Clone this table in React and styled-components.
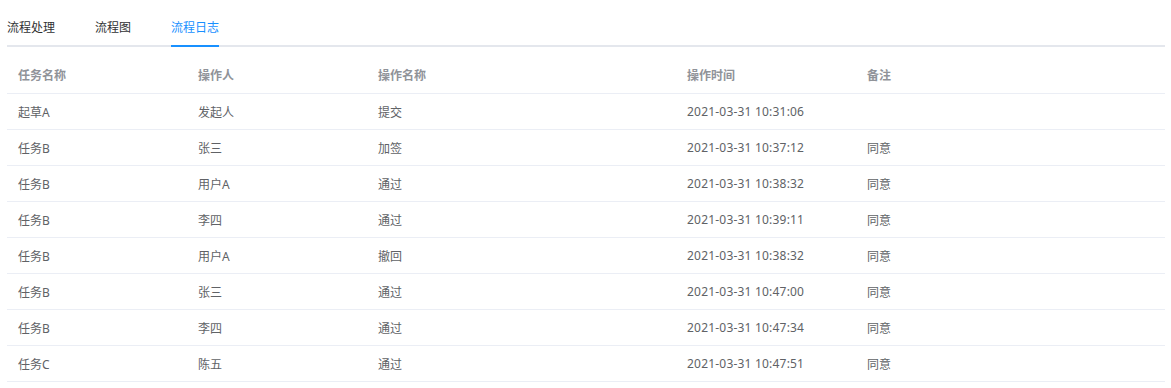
import React, { useState } from 'react';
import styled, { createGlobalStyle } from 'styled-components';

const GlobalStyle = createGlobalStyle`
  body {
    margin: 0;
    background: #fff;
    font-family: "Noto Sans", "Noto Sans CJK SC", sans-serif;
  }
`;

const Page = styled.div`
  padding: 0 6px 0 7px;
`;

const TabBar = styled.div`
  display: flex;
  height: 45px;
  border-bottom: 2px solid #e4e7ed;
  margin-bottom: 10px;
`;

const Tab = styled.div`
  position: relative;
  display: flex;
  align-items: center;
  padding-top: 9px;
  margin-right: ${p => (p.$last ? 0 : '40px')};
  font-size: 12px;
  color: ${p => (p.$active ? '#1890ff' : '#303133')};
  cursor: pointer;

  &::after {
    content: '';
    display: ${p => (p.$active ? 'block' : 'none')};
    position: absolute;
    left: 0;
    right: 0;
    bottom: -2px;
    height: 2px;
    background: #1890ff;
  }
`;

const Table = styled.table`
  width: 100%;
  border-collapse: collapse;
  table-layout: fixed;
  font-size: 12px;
`;

const Th = styled.th`
  height: 36px;
  padding: 0 11px;
  text-align: left;
  font-weight: 600;
  color: #909399;
  border-bottom: 1px solid #ebeef5;
`;

const Td = styled.td`
  height: 35px;
  padding: 0 11px;
  color: #606266;
  border-bottom: 1px solid #ebeef5;
  letter-spacing: ${p => (p.$mono ? '0.2px' : 'normal')};
`;

const columns = [
  { title: '任务名称', width: 180 },
  { title: '操作人', width: 180 },
  { title: '操作名称', width: 309 },
  { title: '操作时间', width: 180 },
  { title: '备注' },
];

const rows = [
  ['起草A', '发起人', '提交', '2021-03-31 10:31:06', ''],
  ['任务B', '张三', '加签', '2021-03-31 10:37:12', '同意'],
  ['任务B', '用户A', '通过', '2021-03-31 10:38:32', '同意'],
  ['任务B', '李四', '通过', '2021-03-31 10:39:11', '同意'],
  ['任务B', '用户A', '撤回', '2021-03-31 10:38:32', '同意'],
  ['任务B', '张三', '通过', '2021-03-31 10:47:00', '同意'],
  ['任务B', '李四', '通过', '2021-03-31 10:47:34', '同意'],
  ['任务C', '陈五', '通过', '2021-03-31 10:47:51', '同意'],
];

const tabs = ['流程处理', '流程图', '流程日志'];

export default function App() {
  const [active, setActive] = useState(2);
  return (
    <Page>
      <GlobalStyle />
      <TabBar>
        {tabs.map((t, i) => (
          <Tab key={t} $active={i === active} $last={i === tabs.length - 1} onClick={() => setActive(i)}>
            {t}
          </Tab>
        ))}
      </TabBar>
      <Table>
        <colgroup>
          {columns.map(c => (
            <col key={c.title} style={c.width ? { width: c.width } : undefined} />
          ))}
        </colgroup>
        <thead>
          <tr>
            {columns.map(c => (
              <Th key={c.title}>{c.title}</Th>
            ))}
          </tr>
        </thead>
        <tbody>
          {rows.map((r, i) => (
            <tr key={i}>
              {r.map((cell, j) => (
                <Td key={j} $mono={j === 3}>{cell}</Td>
              ))}
            </tr>
          ))}
        </tbody>
      </Table>
    </Page>
  );
}
